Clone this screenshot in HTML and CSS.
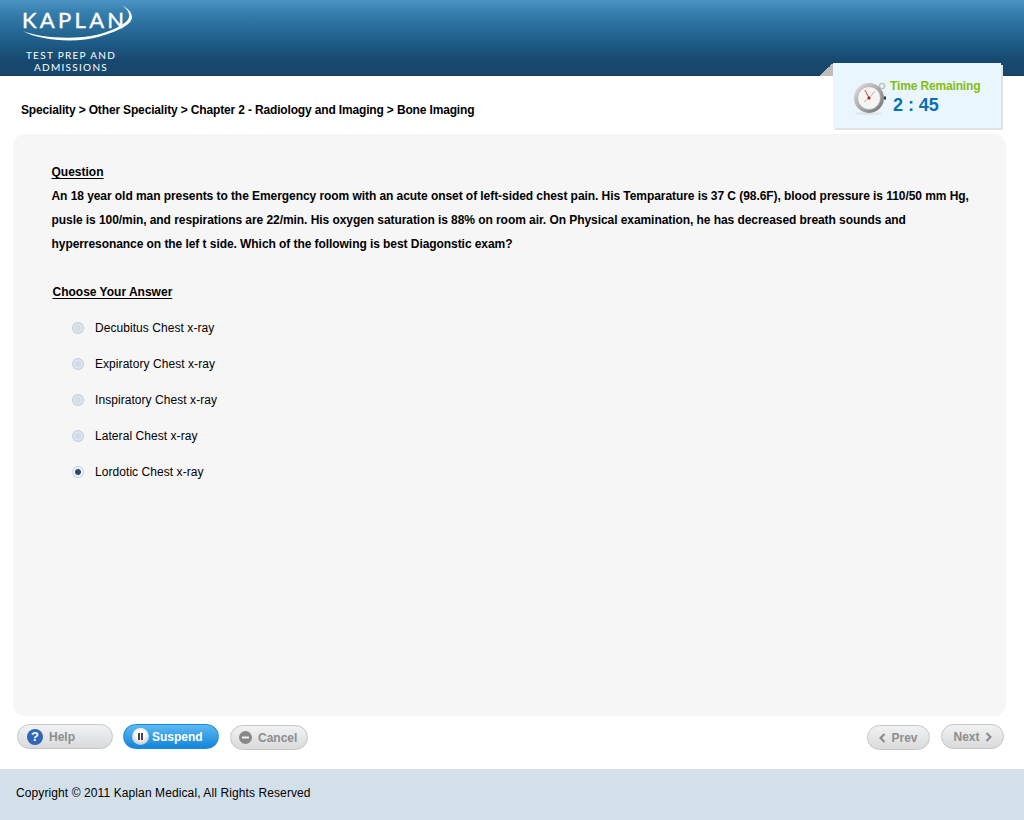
FILE: index.html
```html
<!DOCTYPE html>
<html lang="en">
<head>
<meta charset="utf-8">
<title>Kaplan Test</title>
<link rel="stylesheet" href="styles.css">
</head>
<body>
<header class="top">
  <div class="logo">
    <svg class="logo-arc" width="140" height="50" viewBox="0 0 140 50" aria-hidden="true">
      <path d="M23 31 C 38 40, 75 44, 100 36.500 C 120 30.500, 132 24, 132 17 C 132 12, 127 8, 122 5 C 127 9, 130 13, 129 17 C 128 23, 115 30, 98 34.500 C 75 40, 40 38, 23 31 Z" fill="#fff"/>
    </svg>
    <div class="logo-word">KAPLAN</div>
    <div class="logo-sub">TEST PREP AND<br>ADMISSIONS</div>
  </div>
</header>
<aside class="timer">
  <span class="timer-fold"></span>
  <svg class="watch" width="36" height="36" viewBox="0 0 36 36" aria-hidden="true">
    <defs>
      <linearGradient id="rim" x1="0" y1="0" x2="1" y2="1">
        <stop offset="0" stop-color="#e6e6e6"/>
        <stop offset="1" stop-color="#6c6c6c"/>
      </linearGradient>
    </defs>
    <circle cx="28" cy="4" r="2.6" fill="none" stroke="#bbb" stroke-width="1.4"/>
    <rect x="29.500" y="14.500" width="2.500" height="3" fill="#333"/>
    <ellipse cx="15" cy="31.500" rx="14" ry="1.500" fill="#dfe3e5"/>
    <circle cx="15" cy="16" r="15" fill="url(#rim)"/>
    <circle cx="15" cy="16" r="11.500" fill="#f6f5f4" stroke="#999" stroke-width=".6"/>
    <path d="M15 16 L11 8" stroke="#c33" stroke-width="1"/>
    <path d="M15 16 L21 9 M15 16 L10 20" stroke="#b5b5b5" stroke-width="1"/>
    <circle cx="15" cy="16" r="1.500" fill="#a11"/>
  </svg>
  <div class="timer-text">
    <div class="timer-label">Time Remaining</div>
    <div class="timer-value">2 : 45</div>
  </div>
</aside>
<nav class="crumbs">Speciality &gt; Other Speciality &gt; Chapter 2 - Radiology and Imaging &gt; Bone Imaging</nav>
<main class="panel">
  <h2 class="heading">Question</h2>
  <p class="question">An 18 year old man presents to the Emergency room with an acute onset of left-sided chest pain. His Temparature is 37 C (98.6F), blood pressure is 110/50 mm Hg, pusle is 100/min, and respirations are 22/min. His oxygen saturation is 88% on room air. On Physical examination, he has decreased breath sounds and hyperresonance on the lef t side. Which of the following is best Diagonstic exam?</p>
  <h2 class="heading answer-heading">Choose Your Answer</h2>
  <div class="answers">
    <label class="answer"><span class="radio"></span>Decubitus Chest x-ray</label>
    <label class="answer"><span class="radio"></span>Expiratory Chest x-ray</label>
    <label class="answer"><span class="radio"></span>Inspiratory Chest x-ray</label>
    <label class="answer"><span class="radio"></span>Lateral Chest x-ray</label>
    <label class="answer"><span class="radio checked"></span>Lordotic Chest x-ray</label>
  </div>
</main>
<div class="actions">
  <div class="group">
    <button class="btn wide help"><svg class="ico" width="16" height="16" viewBox="0 0 16 16" aria-hidden="true"><circle cx="8" cy="8" r="8" fill="#2f66b8"/><text x="8" y="12" text-anchor="middle" class="ico-q">?</text></svg>Help</button>
    <button class="btn wide primary"><span class="pause"><i></i><i></i></span>Suspend</button>
    <button class="btn cancel"><svg class="ico" width="13" height="13" viewBox="0 0 13 13" aria-hidden="true"><circle cx="6.500" cy="6.500" r="6.500" fill="#888"/><rect x="3" y="5.500" width="7" height="2" fill="#eee"/></svg>Cancel</button>
  </div>
  <div class="group right">
    <button class="btn nav prev"><svg width="7" height="10" viewBox="0 0 7 10" aria-hidden="true"><path d="M5.500 1 L1.500 5 L5.500 9" fill="none" stroke="#888" stroke-width="2"/></svg>Prev</button>
    <button class="btn nav next">Next<svg width="7" height="10" viewBox="0 0 7 10" aria-hidden="true"><path d="M1.500 1 L5.500 5 L1.500 9" fill="none" stroke="#888" stroke-width="2"/></svg></button>
  </div>
</div>
<footer class="foot">Copyright © 2011 Kaplan Medical, All Rights Reserved</footer>
</body>
</html>
```
FILE: styles.css
```css
* { box-sizing: border-box; }
html, body { margin: 0; height: 820px; overflow: hidden; }
body {
  position: relative;
  width: 1024px;
  background: #fff;
  font-family: "Liberation Sans", Arial, sans-serif;
  color: #000;
  display: flex;
  flex-direction: column;
}
.top {
  height: 76px;
  flex: none;
  background: linear-gradient(#4b95c6 0, #367fae 12px, #1f5f8a 40px, #17496f 60px, #17466c 75px, #123a5a 76px);
  padding-left: 22px;
}
.logo { position: relative; width: 120px; color: #fff; }
.logo-arc { position: absolute; left: -22px; top: 0; }
.logo-word { padding-top: 5px; font-family: Lato, sans-serif; font-size: 22px; line-height: 30px; letter-spacing: 3.3px; white-space: nowrap; -webkit-text-stroke: .4px #fff; }
.logo-sub { margin: 14px 0 0 2px; font-family: Lato, sans-serif; font-size: 10px; line-height: 12px; text-align: center; width: 94px; letter-spacing: 1.3px; white-space: nowrap; }
.timer {
  position: absolute;
  left: 833px;
  top: 63px;
  width: 168px;
  height: 65px;
  background: #e9f6fe;
  box-shadow: 2px 2px 0 #e2e2e2;
  display: flex;
  padding: 14px 0 0 21px;
}
.timer-fold {
  position: absolute;
  left: -13px;
  top: 0;
  width: 13px;
  height: 13px;
  background: linear-gradient(135deg, transparent 50%, #bdbdbd 50%);
}
.watch { flex: none; margin-top: 5px; }
.timer-label { font-size: 12px; font-weight: bold; color: #84bd12; line-height: 16px; margin-top: 1px; letter-spacing: -.15px; }
.timer-value { font-size: 18px; font-weight: bold; color: #0a6fb5; line-height: 22px; padding-left: 3px; letter-spacing: -.05px; }
.crumbs { flex: none; height: 58px; padding: 27px 0 0 21px; font-size: 12px; font-weight: bold; line-height: 15px; letter-spacing: -.155px; }
.panel {
  flex: none;
  height: 582px;
  margin: 0 18px 0 13px;
  background: #f6f6f6;
  border-radius: 12px;
  padding: 28px 30px 0 38.500px;
}
.heading { display: inline-block; margin: 0; font-size: 12px; font-weight: bold; line-height: 15px; text-decoration: underline; text-underline-offset: 2px; }
.question { margin: 4px 0 0; font-size: 12px; font-weight: bold; line-height: 24px; letter-spacing: -.063px; }
.answer-heading { margin: 29px 0 0 1px; display: block; }
.answers { margin-top: 10px; }
.answer { display: flex; align-items: center; height: 36px; padding-left: 20px; font-size: 12px; line-height: 15px; letter-spacing: .06px; }
.radio {
  width: 12px;
  height: 12px;
  margin-right: 11.500px;
  border-radius: 50%;
  background: radial-gradient(circle, #d3dbe4 0 2.500px, #e3e9ef 4px, #bfd0e1 5.500px);
  flex: none;
}
.radio.checked { background: radial-gradient(circle, #2e4868 0 2.500px, #eef3f7 3.500px, #eef3f7 4.500px, #b8cbdc 6px); }
.actions { flex: none; height: 53px; padding: 8px 20px 0 17px; display: flex; justify-content: space-between; }
.group { display: flex; gap: 10px; }
.group.right { gap: 11px; }
.btn {
  height: 25px;
  padding: 0;
  border: 1px solid #c6c6c6;
  border-radius: 13px;
  background: linear-gradient(#f1f2f3, #d9dadb);
  color: #8e8e8e;
  font: bold 12px "Liberation Sans", Arial, sans-serif;
  display: flex;
  align-items: center;
}
.wide { width: 96px; padding-left: 9px; }
.ico { margin-right: 6px; flex: none; }
.ico-q { font: bold 13px "Liberation Sans", sans-serif; fill: #fff; }
.primary {
  border-color: #1b8ad8;
  background: linear-gradient(#5db9f1, #1285dc);
  color: #fff;
  padding-left: 8px;
}
.pause {
  width: 17px;
  height: 17px;
  border-radius: 50%;
  background: radial-gradient(circle at 50% 35%, #fff 30%, #aab4c0 100%);
  margin-right: 3px;
  display: flex;
  align-items: center;
  justify-content: center;
  gap: 1px;
}
.pause i { width: 2px; height: 7px; background: #444; }
.cancel { width: 78px; margin: 1px 0 0 1px; padding-left: 8px; }
.nav { width: 63px; justify-content: center; gap: 5px; }
.prev { margin-top: 1px; }
.foot {
  flex: none;
  height: 51px;
  background: #d3e0ea;
  padding: 17px 0 0 16px;
  font-size: 12px;
  line-height: 15px;
  letter-spacing: .1px;
}
```
